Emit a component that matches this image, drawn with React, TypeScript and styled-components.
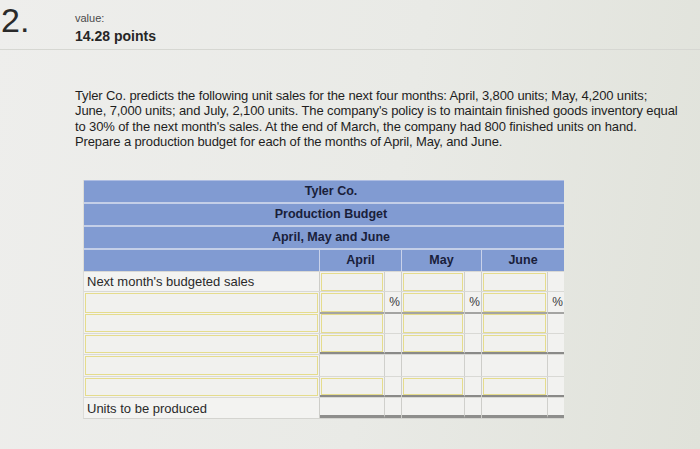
import styled, { createGlobalStyle } from "styled-components";

const GlobalStyle = createGlobalStyle`
  html, body {
    margin: 0;
    padding: 0;
  }
  body {
    font-family: "Liberation Sans", Arial, sans-serif;
    color: #232323;
  }
`;

const months = ["April", "May", "June"];

type Row = {
  label?: string;
  labelInput?: boolean;
  valueInput?: boolean;
  pct?: boolean;
  rule?: "none" | "light" | "dark" | "double";
  height: number;
};

const rows: Row[] = [
  { label: "Next month's budgeted sales", valueInput: true, height: 19 },
  { labelInput: true, valueInput: true, pct: true, rule: "light", height: 20 },
  { labelInput: true, valueInput: true, height: 20 },
  { labelInput: true, valueInput: true, rule: "dark", height: 20 },
  { labelInput: true, height: 21 },
  { labelInput: true, valueInput: true, rule: "dark", height: 20 },
  { label: "Units to be produced", rule: "double", height: 20 },
];

const questionLines = [
  "Tyler Co. predicts the following unit sales for the next four months: April, 3,800 units; May, 4,200 units;",
  "June, 7,000 units; and July, 2,100 units. The company's policy is to maintain finished goods inventory equal",
  "to 30% of the next month's sales. At the end of March, the company had 800 finished units on hand.",
  "Prepare a production budget for each of the months of April, May, and June.",
];

export default function App() {
  return (
    <Page>
      <GlobalStyle />
      <Header>
        <Number>2.</Number>
        <Meta>
          <MetaLabel>value:</MetaLabel>
          <Points>14.28 points</Points>
        </Meta>
      </Header>
      <Divider />
      <Question>
        {questionLines.map((l) => (
          <QuestionLine key={l}>{l}</QuestionLine>
        ))}
      </Question>
      <Budget>
        <TitleRow>Tyler Co.</TitleRow>
        <TitleRow>Production Budget</TitleRow>
        <TitleRow>April, May and June</TitleRow>
        <HeadRow>
          <HeadCell />
          {months.map((m) => (
            <HeadCell key={m} $month>
              {m}
            </HeadCell>
          ))}
        </HeadRow>
        {rows.map((r, i) => (
          <BodyRow key={i} $h={r.height}>
            <LabelCell>
              {r.label && <LabelText>{r.label}</LabelText>}
              {r.labelInput && <InputBox />}
            </LabelCell>
            {months.map((m) => (
              <MonthGroup key={m}>
                <ValueCell $rule={r.rule ?? "none"}>{r.valueInput && <InputBox />}</ValueCell>
                <PctCell $rule={r.rule ?? "none"}>{r.pct ? "%" : ""}</PctCell>
              </MonthGroup>
            ))}
          </BodyRow>
        ))}
      </Budget>
    </Page>
  );
}

const Page = styled.div`
  width: 700px;
  height: 449px;
  overflow: hidden;
  background: linear-gradient(100deg, #eeeeec 0%, #e9eae6 55%, #e0e2da 100%);
`;

const Header = styled.div`
  display: flex;
  align-items: flex-start;
  height: 49px;
`;

const Number = styled.div`
  width: 74px;
  padding-left: 1px;
  margin-top: 3px;
  font-size: 34px;
  line-height: 34px;
  color: #2a2a2a;
`;

const Meta = styled.div`
  display: flex;
  flex-direction: column;
  padding-top: 12px;
`;

const MetaLabel = styled.span`
  font-size: 11px;
  color: #4a4a4a;
  line-height: 13px;
`;

const Points = styled.span`
  font-size: 14px;
  font-weight: bold;
  color: #262626;
  margin-top: 3px;
  line-height: 16px;
`;

const Divider = styled.div`
  height: 1px;
  background: #d6d7d2;
`;

const Question = styled.div`
  margin: 38px 0 0 75px;
  font-size: 13px;
  line-height: 15.3px;
  letter-spacing: -0.12px;
  color: #1e1e1e;
`;

const QuestionLine = styled.div`
  white-space: nowrap;
`;

const Budget = styled.div`
  margin: 31px 0 0 83px;
  width: 480px;
  background: #f2f2f0;
  border-bottom: 1px solid #d4d4d0;
  border-left: 1px solid #dcdcd8;
`;

const TitleRow = styled.div`
  height: 21px;
  line-height: 21px;
  padding-left: 14px;
  text-align: center;
  background: #819bd2;
  border-top: 2px solid #c4cfe8;
  font-size: 12.5px;
  font-weight: bold;
  color: #19203a;
  &:first-child {
    border-top: 1px solid #aebde2;
  }
`;

const HeadRow = styled.div`
  display: grid;
  grid-template-columns: 235px 82px 80px 83px;
  height: 21px;
  background: #819bd2;
  border-top: 2px solid #c4cfe8;
`;

const HeadCell = styled.div<{ $month?: boolean }>`
  border-left: ${({ $month }) => ($month ? "1px solid #c9d2ea" : "none")};
  text-align: center;
  line-height: 21px;
  font-size: 12.5px;
  font-weight: bold;
  color: #19203a;
`;

const BodyRow = styled.div<{ $h: number }>`
  display: grid;
  grid-template-columns: 235px 82px 80px 83px;
  height: ${({ $h }) => $h}px;
  border-top: 1px solid #d9d9d5;
`;

const LabelCell = styled.div`
  display: flex;
  align-items: center;
  padding: 1px;
  background: #f3f3f1;
`;

const LabelText = styled.span`
  font-size: 13px;
  color: #2a2a2a;
  padding-left: 2px;
`;

const InputBox = styled.div`
  flex: 1;
  align-self: stretch;
  border: 1.5px solid #e5dc8c;
  background: #f1f1ee;
`;

const MonthGroup = styled.div`
  display: grid;
  grid-template-columns: 1fr 17px;
  border-left: 1px solid #cdcdc9;
`;

const ruleBorder = (r: string) =>
  r === "double"
    ? "3px solid #8e8e8c"
    : r === "dark"
    ? "2px solid #8a8a88"
    : r === "light"
    ? "2px solid #a4a4a2"
    : "none";

const ValueCell = styled.div<{ $rule: string }>`
  display: flex;
  padding: 1px 1px 0 1px;
  border-bottom: ${({ $rule }) => ruleBorder($rule)};
`;

const PctCell = styled.div<{ $rule: string }>`
  border-left: 1px solid #d0d0cc;
  border-bottom: ${({ $rule }) => ruleBorder($rule)};
  font-size: 12px;
  color: #3a3a3a;
  text-align: right;
  padding-right: 1px;
  line-height: 20px;
`;
